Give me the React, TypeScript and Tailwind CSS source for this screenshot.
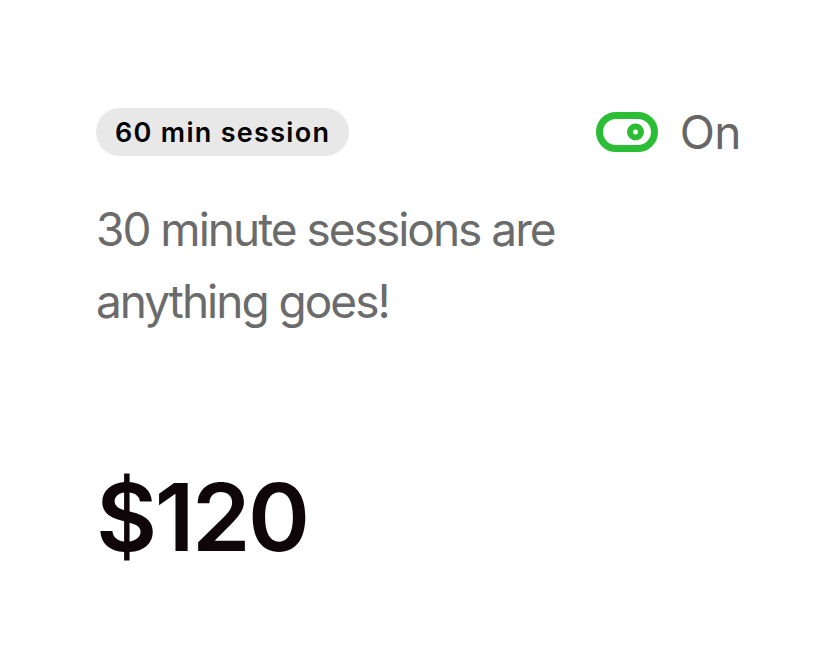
import React from "react";

function ToggleIcon() {
  return (
    <svg width="62" height="40" viewBox="0 0 62 40" fill="none">
      <rect x="3.5" y="3.5" width="55" height="33" rx="16.5" stroke="#2bbd33" strokeWidth="7" />
      <circle cx="39.5" cy="20" r="5.5" stroke="#2bbd33" strokeWidth="6" />
    </svg>
  );
}

export default function App() {
  return (
    <div
      className="w-[837px] h-[672px] bg-white px-[96px] pt-[108px]"
      style={{ fontFamily: "Inter, 'Liberation Sans', sans-serif" }}
    >
      <div className="flex items-center justify-between">
        <div className="h-[48px] rounded-full bg-[#e8e8e8] px-[19px] flex items-center text-[27px] font-semibold text-black leading-none tracking-[1.3px]">
          60 min session
        </div>
        <div className="flex items-center gap-[22px]">
          <ToggleIcon />
          <span className="text-[46px] leading-none text-[#666666] tracking-[-0.5px]">On</span>
        </div>
      </div>
      <p className="mt-[37px] max-w-[500px] text-[46px] leading-[72px] text-[#6b6b6b] tracking-[-2px]">
        30 minute sessions are
        <br />
        anything goes!
      </p>
      <div className="mt-[133px] text-[94px] leading-[94px] font-semibold text-[#0e0609] tracking-[-2.5px]">
        $120
      </div>
    </div>
  );
}
